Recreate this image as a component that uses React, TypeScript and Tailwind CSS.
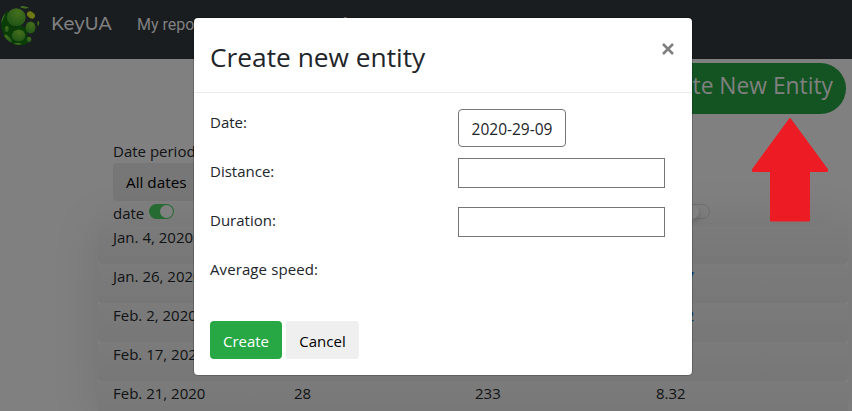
const rows = [
  { date: "Jan. 4, 2020", distance: "", duration: "", speed: "" },
  { date: "Jan. 26, 2020", distance: "", duration: "", speed: "11.27" },
  { date: "Feb. 2, 2020", distance: "", duration: "", speed: "10.42" },
  { date: "Feb. 17, 2020", distance: "", duration: "", speed: "" },
  { date: "Feb. 21, 2020", distance: "28", duration: "233", speed: "8.32" },
];

function Logo() {
  return (
    <svg viewBox="0 0 42 50" className="h-[50px] w-[42px] shrink-0">
      <defs>
        <radialGradient id="ball" cx="60%" cy="25%" r="80%">
          <stop offset="0" stopColor="#456f1c" />
          <stop offset="1" stopColor="#1f5418" />
        </radialGradient>
        <clipPath id="globe"><circle cx="20.5" cy="25.5" r="19.8" /></clipPath>
      </defs>
      <g clipPath="url(#globe)">
        <path d="M1 20C3 13 6 10 9 12C8 20 12 25 16 27C20 24 24 26 26 29C28 32 27 37 28 40C29 43 25 46 20 46C7 44 0 34 1 20Z" fill="#0a3c08" />
        <g fill="url(#ball)">
          <ellipse cx="16.3" cy="17.3" rx="9.4" ry="9" />
          <ellipse cx="18.5" cy="35.5" rx="6.7" ry="5.9" />
          <ellipse cx="30.5" cy="27.6" rx="5" ry="6" />
          <ellipse cx="6.7" cy="29" rx="2" ry="3.1" />
          <ellipse cx="8" cy="38.5" rx="2" ry="5" transform="rotate(-43 8 38.5)" />
          <ellipse cx="29" cy="39.5" rx="2.3" ry="2.8" />
          <ellipse cx="2.7" cy="18" rx="1" ry="5" transform="rotate(20 2.7 18)" />
          <ellipse cx="38.2" cy="23.5" rx="1.1" ry="2.4" />
          <ellipse cx="17.5" cy="44" rx="4" ry="1" />
        </g>
        <ellipse cx="31" cy="15" rx="4.3" ry="3.2" transform="rotate(35 31 15)" fill="#6f7811" />
        <ellipse cx="24.5" cy="7.2" rx="4.2" ry="1.2" transform="rotate(5 24.5 7.2)" fill="#416d20" />
      </g>
    </svg>
  );
}

function Navbar() {
  return (
    <nav className="flex h-[59px] shrink-0 items-start bg-[#1a1d20] text-[#808080]">
      <Logo />
      <span className="ml-[9px] mt-[9px] w-[63px] font-['Montserrat',Lato,sans-serif] text-[18px] font-medium leading-[30px]">KeyUA</span>
      <div className="ml-[23px] mt-[13px] flex gap-6 whitespace-nowrap font-[Roboto,sans-serif] text-base leading-6">
        <span>My reports</span>
        <span>Weekly total info</span>
      </div>
    </nav>
  );
}

function Report() {
  return (
    <section className="ml-[98px] w-[750px] text-[#101214]">
      <div className="ml-[15px] pt-[25px]">
        <div className="h-[24px] leading-[24px]">Date period</div>
        <button className="block h-[38px] w-[120px] rounded bg-[#777] px-[13px] text-left text-[15.3px] text-black">All dates</button>
      </div>
      <div className="flex h-[24px] items-start pl-[15px]">
        <span className="leading-[24px]">date</span>
        <span className="ml-[5px] mt-[3px] flex h-[15px] w-[25px] justify-end rounded-full bg-[#266c32] p-px">
          <span className="size-[13px] rounded-full bg-[#808080]" />
        </span>
        <span className="ml-[510px] mt-[3px] flex h-[15px] w-[26px] rounded-full border border-[#6d6d6d]">
          <span className="size-[14px] rounded-full bg-[#808080] shadow-[1px_3px_4px_#5556]" />
        </span>
      </div>
      <div className="rounded shadow-[0_0_50px_#0000001c]">
        {rows.map((row) => (
          <div key={row.date} className="grid h-[39px] grid-cols-[181px_181px_181px_1fr] rounded bg-linear-to-b from-[#7b7b7b] to-[#767776] pl-[15px] leading-[24px]">
            <span>{row.date}</span>
            <span>{row.distance}</span>
            <span>{row.duration}</span>
            <span className={row.speed.length > 4 ? "text-[#003e80]" : ""}>{row.speed}</span>
          </div>
        ))}
      </div>
    </section>
  );
}

function Modal() {
  return (
    <div className="absolute left-[194px] top-[18px] h-[357px] w-[498px] rounded bg-white text-[#212529] shadow-[0_0_0_1px_#00000033]">
      <header className="flex h-[75px] justify-between border-b border-[#e9ecef] px-4">
        <h1 className="pt-[19px] text-[26.3px] leading-[40px]">Create new entity</h1>
        <svg viewBox="0 0 12 12" className="mr-[2px] mt-[25px] size-[12px] stroke-[#7f7f7f]" strokeWidth="2.5">
          <path d="M1 1L11 11M11 1L1 11" />
        </svg>
      </header>
      <div className="grid grid-cols-[248px_1fr] grid-rows-[49px_49px_49px_65px] px-4 pt-4 leading-[26px]">
        <span>Date:</span>
        <button className="h-[38px] w-[108px] rounded border border-[#767676] pt-[2px] text-[15.5px]">2020-29-09</button>
        <span>Distance:</span>
        <input className="h-[30px] w-[207px] border border-[#767676]" />
        <span>Duration:</span>
        <input className="h-[30px] w-[207px] border border-[#767676]" />
        <span className="tracking-[0.1px]">Average speed:</span>
      </div>
      <footer className="flex gap-1 px-4">
        <button className="h-[38px] w-[72px] rounded bg-[#28a745] pt-[2px] text-white">Create</button>
        <button className="h-[38px] w-[73px] rounded bg-[#efefef] pt-[2px] text-black">Cancel</button>
      </footer>
    </div>
  );
}

export default function App() {
  return (
    <div className="relative flex h-[411px] w-[852px] flex-col overflow-hidden bg-[#808080] font-['Open_Sans',sans-serif] text-[15px]">
      <Navbar />
      <div className="flex justify-end pr-[6px] pt-1">
        <button className="h-[51px] w-[236px] rounded-full bg-[#145423] pb-[5px] pr-[13px] text-right text-[22.8px] leading-none text-[#808080]">Create New Entity</button>
      </div>
      <Report />
      <Modal />
      <svg viewBox="0 0 76 104" className="absolute left-[752px] top-[118px] h-[104px] w-[76px]">
        <path d="M38 1L75 51.5V53H57V102.5H19V53H1V51.5Z" fill="#ed1c24" stroke="#ed1c24" strokeWidth="2" strokeLinejoin="round" />
      </svg>
    </div>
  );
}
